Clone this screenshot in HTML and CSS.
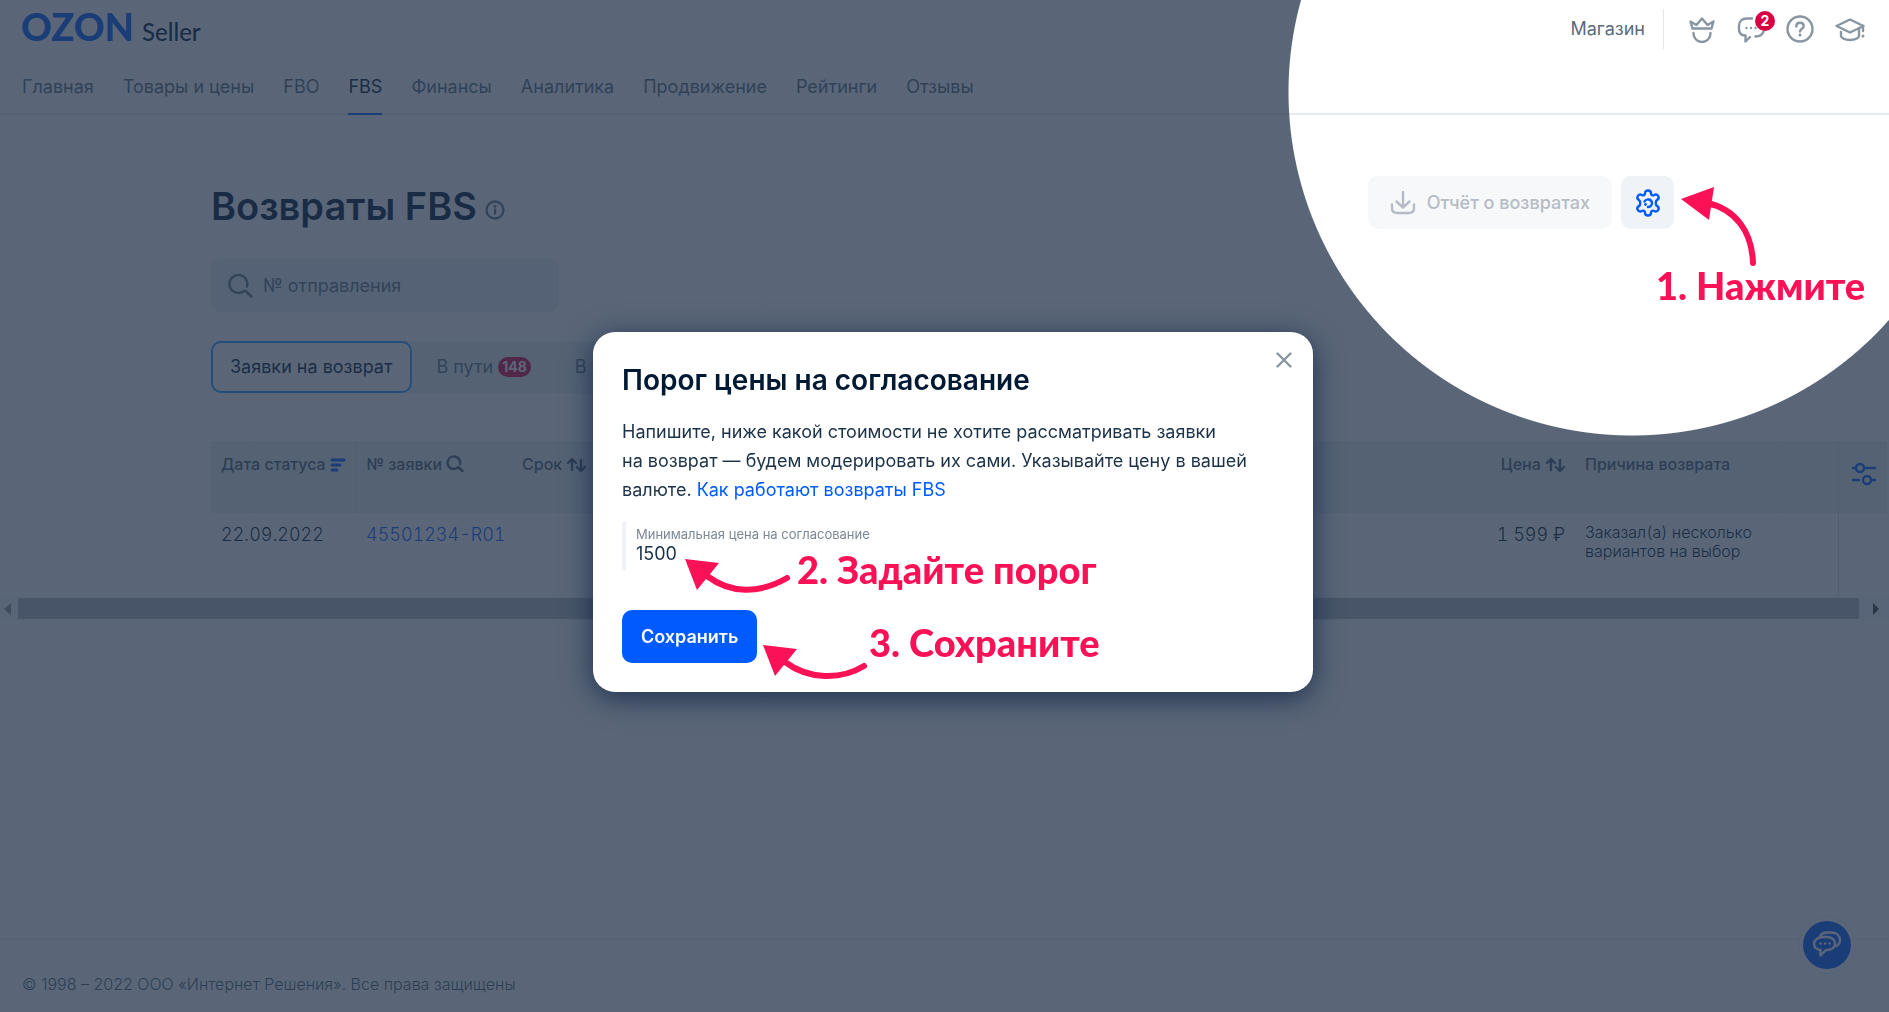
FILE: index.html
```html
<!DOCTYPE html>
<html lang="ru">
<head>
<meta charset="utf-8">
<meta name="viewport" content="width=device-width, initial-scale=1">
<title>Возвраты FBS</title>
<link rel="stylesheet" href="styles.css">
</head>
<body>
<div class="page">
  <header class="header">
    <div class="topbar">
      <a class="logo" href="#"><span class="logo-mark">OZON</span><span class="logo-sub">Seller</span></a>
      <div class="topbar-right">
        <a class="shop" href="#">Магазин</a>
        <span class="divider"></span>
        <button class="icon-btn" type="button" aria-label="Premium">
          <svg width="28" height="28" viewBox="0 0 28 28"><path d="M4.500 13.500h19l2-7-6 3.500-5.500-6.500L8.500 10l-6-3.500z"/><path d="M5.500 18v.500a8.500 8.500 0 0 0 17 0V18"/></svg>
        </button>
        <button class="icon-btn" type="button" aria-label="Сообщения">
          <svg width="28" height="28" viewBox="0 0 28 28"><path d="M15 3.500H9.500C5 3.500 2 6.500 2 10.500V14c0 4 2.500 6.500 6.500 6.500v6L13 22"/><path d="M18.500 21.500c4 0 7-1.500 8-5"/><g class="dots"><circle cx="9.500" cy="13" r="1.200"/><circle cx="14" cy="13" r="1.200"/><circle cx="18.500" cy="13" r="1.200"/></g></svg>
          <span class="badge badge-count">2</span>
        </button>
        <button class="icon-btn" type="button" aria-label="Помощь">
          <svg width="28" height="28" viewBox="0 0 28 28"><circle cx="14" cy="14" r="12.500"/><path d="M10.300 11.500c0-2.300 1.600-3.700 3.700-3.700s3.700 1.400 3.700 3.400c0 2.600-3.700 2.500-3.700 5.300"/><g class="dots"><circle cx="14" cy="20" r="1.500"/></g></svg>
        </button>
        <button class="icon-btn" type="button" aria-label="Обучение">
          <svg width="30" height="28" viewBox="0 0 30 28"><path d="M1.500 11L15 4.500 28.500 11 15 17.500z"/><path d="M6 17v4c0 2 4 4 9 4s9-2 9-4v-8M28 11v5"/><g class="dots"><circle cx="28" cy="21" r="1.500"/></g></svg>
        </button>
      </div>
    </div>
    <nav class="nav">
      <a href="#">Главная</a>
      <a href="#">Товары и цены</a>
      <a href="#">FBO</a>
      <a href="#" class="current">FBS</a>
      <a href="#">Финансы</a>
      <a href="#">Аналитика</a>
      <a href="#">Продвижение</a>
      <a href="#">Рейтинги</a>
      <a href="#">Отзывы</a>
    </nav>
  </header>

  <main class="main">
    <div class="title-row">
      <h1>Возвраты FBS</h1>
      <svg class="info" width="20" height="20" viewBox="0 0 20 20"><circle cx="10" cy="10" r="8.500"/><path d="M10 9.500v4"/><g class="dots"><circle cx="10" cy="6.300" r="1.400"/></g></svg>
      <div class="actions">
        <button class="report" type="button" disabled>
          <svg width="26" height="26" viewBox="0 0 26 26"><path d="M13 2v15M6.500 11.500L13 17.500l6.500-6M2 14.500V18c0 3 2 5 5 5h12c3 0 5-2 5-5v-3.500"/></svg>
          Отчёт о возвратах
        </button>
        <button class="settings" type="button" aria-label="Настройки">
          <svg width="28" height="28" viewBox="0 0 28 28"><path d="M11 4.200c0-1.700 1.200-2.700 3-2.700s3 1 3 2.700c0 1.900 1.500 2.700 3.200 1.800 1.600-.9 3.200-.5 4 1 .9 1.600.4 3-1.100 3.900-1.800 1.100-1.800 5.100 0 6.200 1.500.9 2 2.300 1.100 3.900-.8 1.500-2.400 1.900-4 1-1.700-.9-3.200-.1-3.200 1.800 0 1.700-1.200 2.700-3 2.700s-3-1-3-2.700c0-1.900-1.500-2.700-3.200-1.800-1.600.9-3.200.5-4-1-.9-1.600-.4-3 1.100-3.900 1.800-1.100 1.800-5.100 0-6.200C3.400 10 2.900 8.600 3.800 7c.8-1.500 2.400-1.900 4-1C9.500 6.900 11 6.100 11 4.200z"/><path d="M10.500 12.500a4 4 0 0 1 7.500 1.500 4 4 0 0 1-4 4"/><g class="dots"><circle cx="11.500" cy="15.500" r="1.400"/></g></svg>
        </button>
      </div>
    </div>

    <label class="search">
      <svg width="26" height="26" viewBox="0 0 26 26"><path d="M18.500 18l6 5.500M20 13.500A9 9 0 1 0 11 20c2.500 0 4.500-.6 6-2"/></svg>
      <input type="text" placeholder="№ отправления" aria-label="№ отправления">
    </label>

    <div class="tabs">
      <button class="tab tab-active" type="button">Заявки на возврат</button>
      <button class="tab" type="button">В пути <span class="badge">148</span></button>
      <button class="tab" type="button">В</button>
    </div>
  </main>

  <div class="table-area">
    <table class="table">
      <colgroup><col class="c-date"><col class="c-id"><col><col class="c-price"><col class="c-reason"><col class="c-tools"></colgroup>
      <thead>
        <tr>
          <th>Дата статуса <svg class="sort-on" width="16" height="14" viewBox="0 0 16 14"><path d="M2 2h12M2 7h8M2 12h5"/></svg></th>
          <th>№ заявки <svg width="18" height="18" viewBox="0 0 18 18"><path d="M12.500 12.500L16.500 16M14 9A6.300 6.300 0 1 0 8 14c1.700 0 3.300-.6 4.500-1.800"/></svg></th>
          <th>Срок <svg width="20" height="16" viewBox="0 0 20 16"><path d="M6 13V2M2 6l4-4 4 4M15 3v11M11 10l4 4 4-4"/></svg></th>
          <th class="num">Цена <svg width="20" height="16" viewBox="0 0 20 16"><path d="M6 13V2M2 6l4-4 4 4M15 3v11M11 10l4 4 4-4"/></svg></th>
          <th>Причина возврата</th>
          <th class="tools">
            <button class="icon-btn blue" type="button" aria-label="Настроить столбцы"><svg width="26" height="24" viewBox="0 0 26 24"><path d="M2 6h3M13 6h11M2 18h6M20 18h4"/><circle cx="9" cy="6" r="4"/><circle cx="16" cy="18" r="4"/></svg></button>
          </th>
        </tr>
      </thead>
      <tbody>
        <tr>
          <td>22.09.2022</td>
          <td class="id"><a href="#">45501234-R01</a></td>
          <td></td>
          <td class="num">1 599 ₽</td>
          <td class="reason">Заказал(а) несколько вариантов на выбор</td>
          <td class="tools"></td>
        </tr>
      </tbody>
    </table>
  </div>
  <div class="scrollbar">
    <span class="arrow arrow-left"></span>
    <span class="thumb"></span>
    <span class="arrow arrow-right"></span>
  </div>

  <footer class="footer">© 1998 – 2022 ООО «Интернет Решения». Все права защищены</footer>
  <button class="chat" type="button" aria-label="Чат">
    <svg width="32" height="30" viewBox="0 0 32 30"><path d="M12 7h4c5 0 8 3 8 6.500S21 20 16 20h-1l-5.500 5.500V20C5.500 19.500 3 17 3 13.500 3 10 7 7 12 7z"/><path d="M9 6c1.500-2.500 4-3.500 7-3.500h4c5.500 0 9 3 9 7.500 0 3-1.500 5-3.500 6"/><g class="dots"><circle cx="9.500" cy="13.500" r="1.200"/><circle cx="14" cy="13.500" r="1.200"/><circle cx="18.500" cy="13.500" r="1.200"/></g></svg>
  </button>
</div>

<div class="overlay">
  <div class="hint hint-press">
    <svg class="hint-arrow" width="84" height="84" viewBox="0 0 84 84"><path class="head" d="M0 14L33 2 28 35z"/><path class="tail" d="M26 18C54 24 71 46 72 78"/></svg>
    <span>1. Нажмите</span>
  </div>

  <form class="modal" role="dialog" aria-labelledby="modal-title">
    <button class="close" type="button" aria-label="Закрыть"><svg width="20" height="20" viewBox="0 0 20 20"><path d="M3.500 3.500l13 13M16.500 3.500l-13 13"/></svg></button>
    <h2 id="modal-title">Порог цены на согласование</h2>
    <p>Напишите, ниже какой стоимости не хотите рассматривать заявки на&nbsp;возврат — будем модерировать их сами. Указывайте цену в вашей валюте. <a href="#">Как работают возвраты FBS</a></p>
    <div class="field">
      <label for="min-price">Минимальная цена на согласование</label>
      <input id="min-price" type="text" value="1500">
    </div>
    <button class="save" type="button">Сохранить</button>

    <div class="hint hint-set">
      <svg class="hint-arrow" width="110" height="38" viewBox="0 0 110 38"><path class="head" d="M2 2L36 6 14 33z"/><path class="tail" d="M24 19C48 37 76 37 104 21"/></svg>
      <span>2. Задайте порог</span>
    </div>
    <div class="hint hint-save">
      <svg class="hint-arrow" width="110" height="38" viewBox="0 0 110 38"><path class="head" d="M2 2L36 6 14 33z"/><path class="tail" d="M24 19C48 37 80 37 103 23"/></svg>
      <span>3. Сохраните</span>
    </div>
  </form>
</div>
</body>
</html>
```
FILE: styles.css
```css
*, *::before, *::after { box-sizing: border-box; }

body {
  margin: 0;
  font-family: Inter, "Liberation Sans", sans-serif;
  font-size: 18px;
  line-height: 24px;
  color: #001a34;
  background: #fff;
}

a { color: #005bff; text-decoration: none; }

button, input {
  font: inherit;
  color: inherit;
  background: none;
  border: 0;
  padding: 0;
  margin: 0;
}

svg {
  flex: none;
  fill: none;
  stroke: currentColor;
  stroke-width: 2.4;
  stroke-linecap: round;
  stroke-linejoin: round;
}

.dots { fill: currentColor; stroke: none; }

.page {
  position: relative;
  display: flex;
  flex-direction: column;
  min-height: 100vh;
  overflow: hidden;
}

/* Header */
.header { border-bottom: 2px solid #e6ebf0; }

.topbar {
  display: flex;
  align-items: center;
  justify-content: space-between;
  height: 58px;
  padding: 0 24px 0 21px;
}

.logo { display: flex; align-items: baseline; gap: 8px; }
.logo-mark { font: 900 38px/40px Lato, sans-serif; }
.logo-sub { font: 500 24px/40px Lato, sans-serif; color: #001a34; }

.topbar-right { display: flex; align-items: center; gap: 21px; }
.shop { color: #5a6b7b; }
.divider { width: 1px; height: 40px; margin: 0 3px 0 -3px; background: #e0e5ea; }

.icon-btn {
  position: relative;
  display: flex;
  color: #8895a3;
}
.icon-btn.blue { color: #005bff; }

.badge {
  display: inline-flex;
  align-items: center;
  justify-content: center;
  height: 20px;
  min-width: 20px;
  padding: 0 4px;
  border-radius: 10px;
  background: #d80043;
  color: #fff;
  font-size: 14px;
  font-weight: 700;
  line-height: 20px;
}
.badge-count { position: absolute; left: 18px; top: -4px; }

.nav {
  display: flex;
  gap: 29px;
  height: 55px;
  padding: 0 22px;
}
.nav a {
  height: 57px;
  line-height: 58px;
  color: #5a6b7b;
}
.nav .current { color: #001a34; border-bottom: 2px solid #005bff; }

/* Page heading, search, tabs */
.main { padding: 61px 215px 0 211px; }

.title-row { display: flex; align-items: center; height: 53px; }
h1 { margin: 6px 0 0; font-size: 38px; font-weight: 600; line-height: 44px; }
.info { margin: 14px 0 0 8px; color: #667685; }

.actions { display: flex; gap: 9px; margin-left: auto; }
.actions button {
  display: flex;
  align-items: center;
  justify-content: center;
  gap: 11px;
  height: 53px;
  border-radius: 10px;
}
.report { padding: 0 22px; background: #f6f8fa; color: #b5bcc5; font-weight: 500; }
.settings { width: 53px; background: #eff2f7; color: #005bff; }

.search {
  display: flex;
  align-items: center;
  gap: 10px;
  width: 348px;
  height: 53px;
  margin-top: 30px;
  padding: 0 16px;
  border-radius: 10px;
  background: #eceef1;
  color: #667685;
}
.search input { flex: 1; min-width: 0; outline: 0; }
.search input::placeholder { color: #667685; opacity: 1; }

.tabs {
  display: flex;
  width: 700px;
  height: 52px;
  margin-top: 29px;
  border-radius: 10px;
  background: #e9eff0;
}
.tab {
  display: flex;
  align-items: center;
  gap: 5px;
  padding: 0 20px 0 24px;
  color: #667685;
  white-space: nowrap;
}
.tab-active {
  padding: 0 18px 0 17px;
  border: 2px solid #28a0ff;
  border-radius: 10px;
  background: #fff;
  color: #001a34;
}

/* Table */
.table-area { margin: 48px 2px 0 211px; }
.table { width: 100%; table-layout: fixed; border-collapse: collapse; }
.c-date { width: 145px; }
.c-id { width: 156px; }
.c-price { width: 150px; }
.c-reason { width: 263px; }
.c-tools { width: 49px; }

th {
  height: 72px;
  padding: 11px 10px;
  background: #ebeef0;
  color: #4d5f71;
  font-size: 16px;
  font-weight: 500;
  text-align: left;
  vertical-align: top;
  white-space: nowrap;
}
th:first-child { border-right: 1px solid #e0e4e8; }
th svg { vertical-align: -3px; }
.sort-on { color: #005bff; vertical-align: -2px; stroke-width: 3; }
td {
  height: 83px;
  padding: 10px;
  font-weight: 300;
  vertical-align: top;
  font-variant-numeric: tabular-nums;
}
.id { white-space: nowrap; }
.num { text-align: right; }
.reason { font-size: 16px; line-height: 19px; }
.tools { padding: 21px 12px; border-left: 1px solid #d5dcf0; }

.scrollbar {
  display: flex;
  align-items: center;
  gap: 7px;
  height: 25px;
  padding: 2px 10px 2px 3px;
  background: #f6f7fa;
}
.thumb { flex: 1; height: 21px; margin-right: 7px; background: #b8bcc2; }
.arrow { border: 6px solid transparent; }
.arrow-left { border-left-width: 0; border-right: 7px solid #999; width: 8px; }
.arrow-right { border-right-width: 0; border-left-color: #444; }

.footer {
  margin-top: auto;
  height: 73px;
  padding: 32px 22px 0;
  border-top: 1px solid #e9edf2;
  color: #4d5f71;
  font-size: 16px;
  font-weight: 300;
}

.chat {
  position: absolute;
  right: 38px;
  bottom: 43px;
  display: flex;
  align-items: center;
  justify-content: center;
  width: 48px;
  height: 48px;
  border-radius: 50%;
  background: #005bff;
  color: #fff;
  box-shadow: 0 0 0 4px #fff, 0 0 0 5px #e9edf2;
}

/* Dimmed layer with a round window over the settings button */
.overlay {
  position: fixed;
  inset: 0;
  display: flex;
  align-items: center;
  justify-content: center;
  padding: 12px 0 0 17px;
  background: radial-gradient(circle at calc(100% - 257px) 92px, transparent 343px, rgba(35, 51, 75, .75) 344px);
}

.modal {
  position: relative;
  width: 720px;
  padding: 29px;
  border-radius: 22px;
  background: #fff;
  box-shadow: 0 6px 30px rgba(10, 30, 65, .75);
}
.modal h2 { margin: 0; font-size: 28px; font-weight: 600; line-height: 38px; }
.modal p { margin: 18px 0 0; max-width: 640px; line-height: 29px; color: #1c3248; }
.close { position: absolute; right: 19px; top: 18px; display: flex; color: #8895a3; }

.field {
  display: flex;
  flex-direction: column;
  height: 50px;
  margin-top: 17px;
  padding: 4px 0 0 10px;
  border-left: 4px solid #eff2f7;
  border-radius: 4px;
}
.field label { font-size: 13px; line-height: 18px; color: #7a8896; }
.field input { width: 100px; height: 22px; color: #1c3248; outline: 0; }

.save {
  display: block;
  height: 53px;
  margin-top: 39px;
  padding: 0 19px;
  border-radius: 10px;
  background: #005bff;
  color: #fff;
  font-weight: 600;
}

/* Callouts */
.hint {
  position: absolute;
  color: #fb1155;
  font-family: Lato, Inter, sans-serif;
  font-size: 38px;
  font-weight: 900;
  line-height: 40px;
  white-space: nowrap;
}
.hint-arrow { position: absolute; }
.hint .head { fill: currentColor; stroke: none; }
.hint .tail { stroke-width: 6; }
.hint-press { right: 24px; top: 265px; width: 209px; }
.hint-press .hint-arrow { left: 25px; top: -80px; }
.hint-set { left: 204px; top: 217px; }
.hint-set .hint-arrow { left: -114px; top: 8px; }
.hint-save { left: 276px; top: 290px; }
.hint-save .hint-arrow { left: -108px; top: 21px; }
```
